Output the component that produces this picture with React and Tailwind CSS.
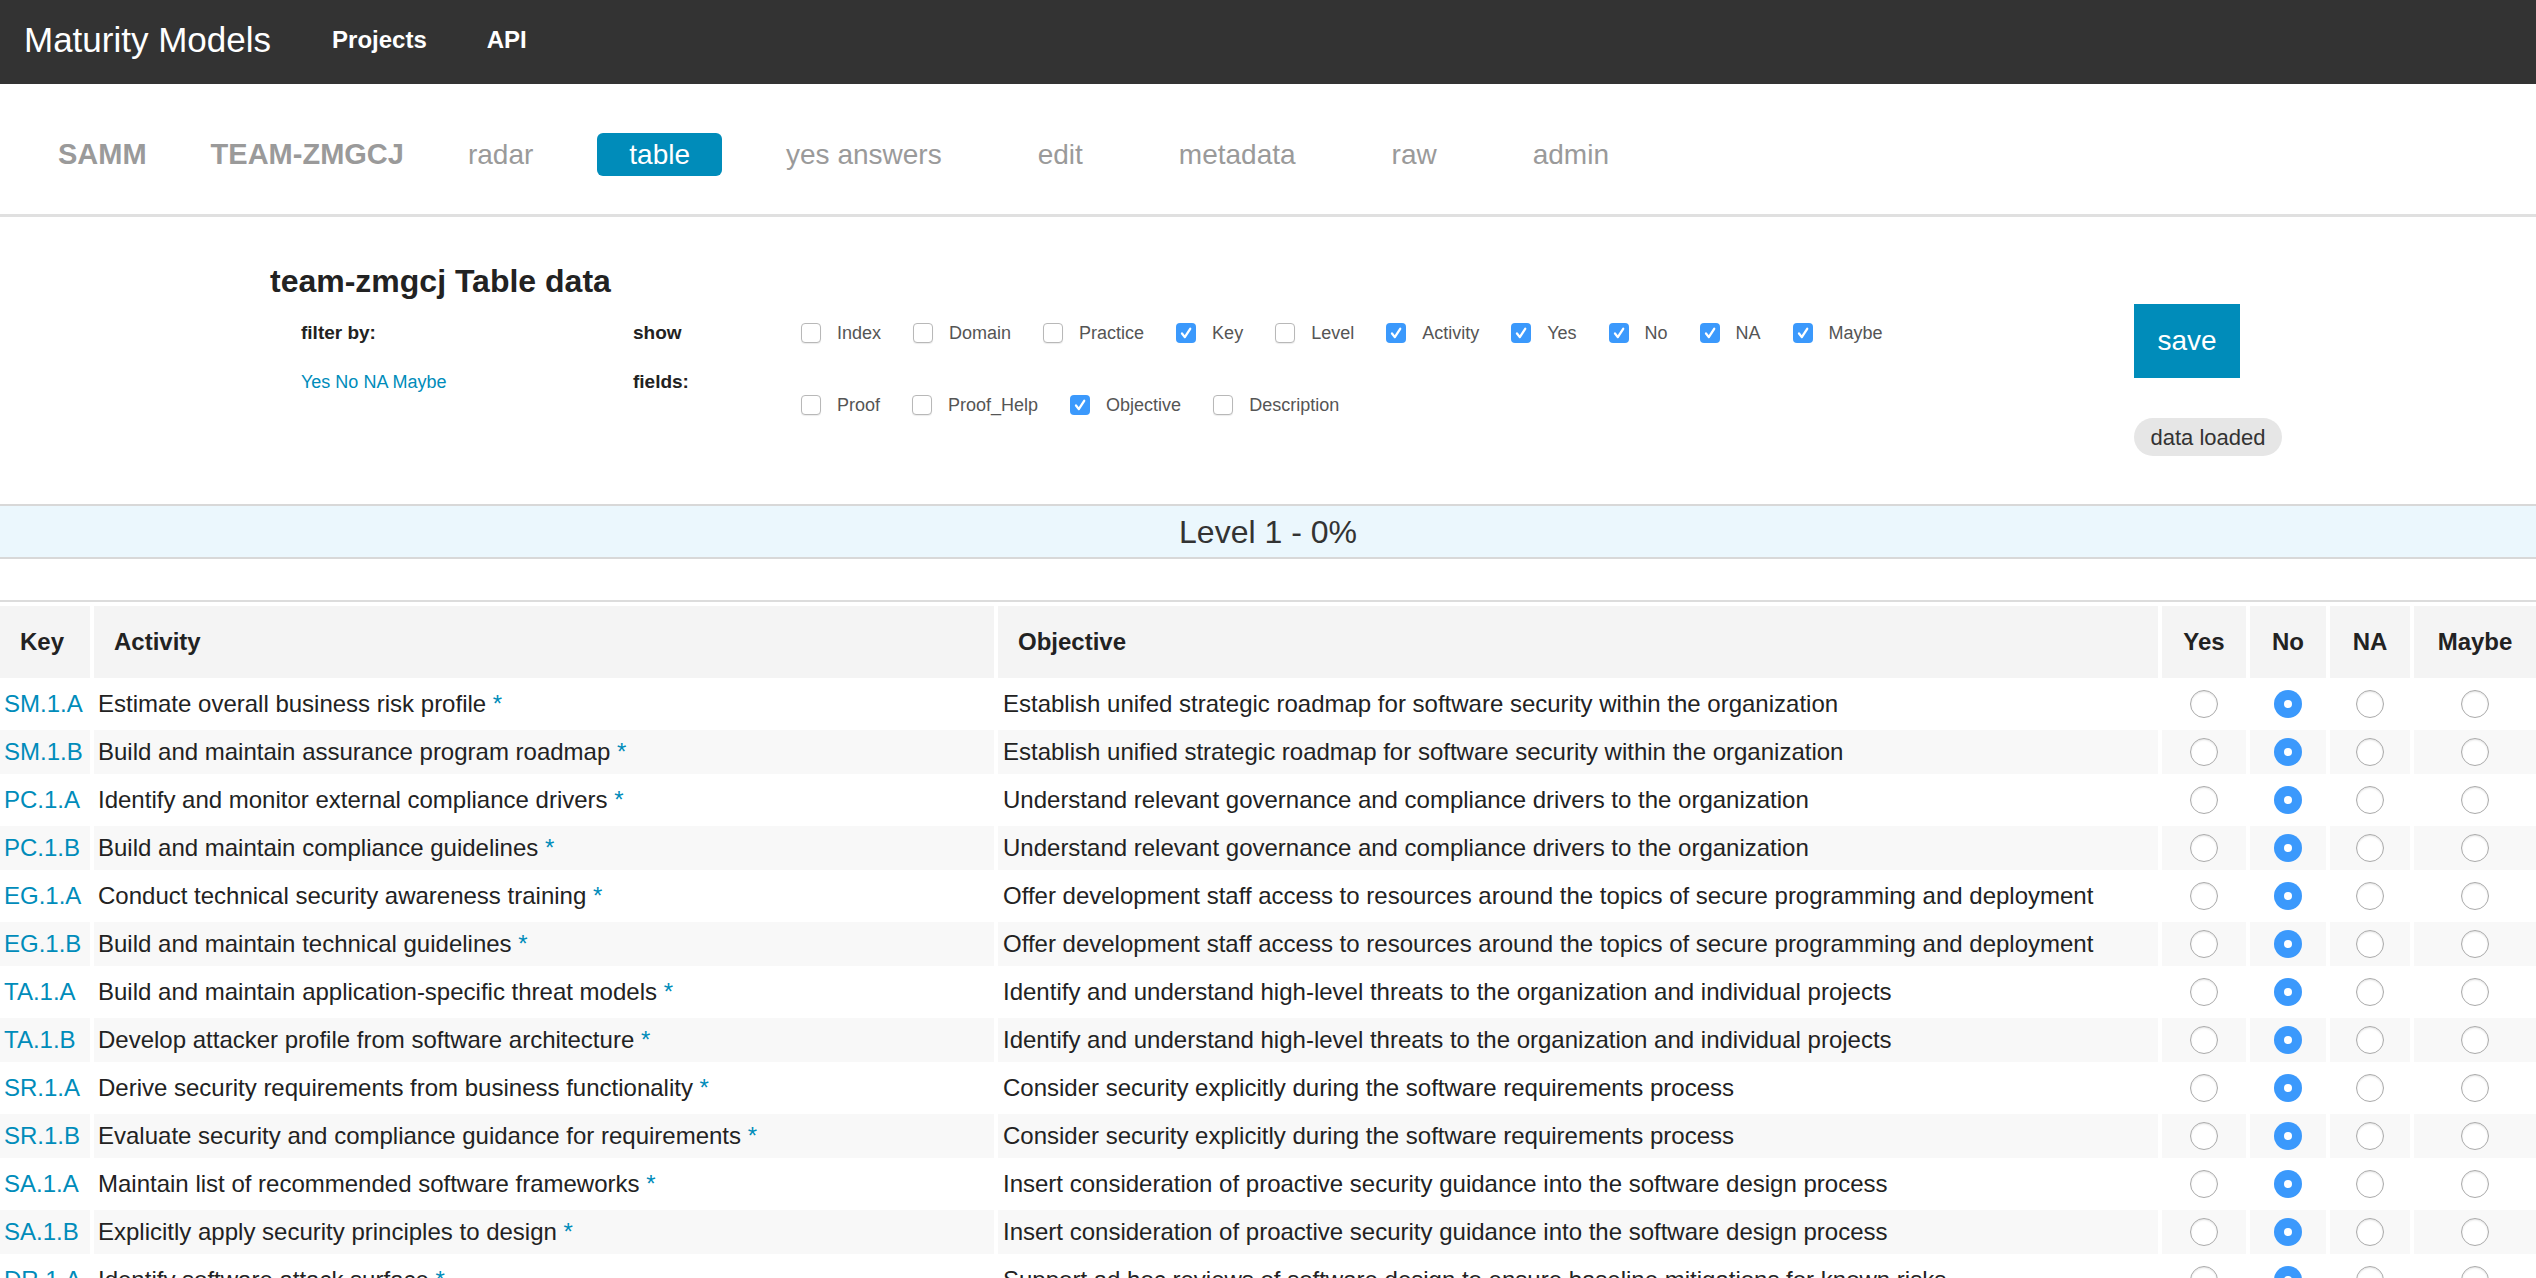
import React from 'react';

const tabs = [
  { label: 'SAMM', className: 'text-[29px] font-bold text-[#9a9a9a]' },
  { label: 'TEAM-ZMGCJ', className: 'text-[29px] font-bold text-[#9a9a9a]' },
  { label: 'radar', className: 'text-[28px] text-[#9a9a9a]' },
  { label: 'table', className: 'ml-[32px] rounded-[6px] bg-[#008cba] text-[28px] text-white' },
  { label: 'yes answers', className: 'ml-[32px] text-[28px] text-[#9a9a9a]' },
  { label: 'edit', className: 'ml-[32px] text-[28px] text-[#9a9a9a]' },
  { label: 'metadata', className: 'ml-[32px] text-[28px] text-[#9a9a9a]' },
  { label: 'raw', className: 'ml-[32px] text-[28px] text-[#9a9a9a]' },
  { label: 'admin', className: 'ml-[32px] text-[28px] text-[#9a9a9a]' },
];

const fields = [
  ['Index', false],
  ['Domain', false],
  ['Practice', false],
  ['Key', true],
  ['Level', false],
  ['Activity', true],
  ['Yes', true],
  ['No', true],
  ['NA', true],
  ['Maybe', true],
  ['Proof', false],
  ['Proof_Help', false],
  ['Objective', true],
  ['Description', false],
];

const gov = 'Establish unified strategic roadmap for software security within the organization';
const comp = 'Understand relevant governance and compliance drivers to the organization';
const edu = 'Offer development staff access to resources around the topics of secure programming and deployment';
const threat = 'Identify and understand high-level threats to the organization and individual projects';
const req = 'Consider security explicitly during the software requirements process';
const arch = 'Insert consideration of proactive security guidance into the software design process';
const design = 'Support ad hoc reviews of software design to ensure baseline mitigations for known risks';

const rows = [
  ['SM.1.A', 'Estimate overall business risk profile', 'Establish unifed strategic roadmap for software security within the organization'],
  ['SM.1.B', 'Build and maintain assurance program roadmap', gov],
  ['PC.1.A', 'Identify and monitor external compliance drivers', comp],
  ['PC.1.B', 'Build and maintain compliance guidelines', comp],
  ['EG.1.A', 'Conduct technical security awareness training', edu],
  ['EG.1.B', 'Build and maintain technical guidelines', edu],
  ['TA.1.A', 'Build and maintain application-specific threat models', threat],
  ['TA.1.B', 'Develop attacker profile from software architecture', threat],
  ['SR.1.A', 'Derive security requirements from business functionality', req],
  ['SR.1.B', 'Evaluate security and compliance guidance for requirements', req],
  ['SA.1.A', 'Maintain list of recommended software frameworks', arch],
  ['SA.1.B', 'Explicitly apply security principles to design', arch],
  ['DR.1.A', 'Identify software attack surface', design],
  ['DR.1.B', 'Analyze design against known security requirements', design],
];

function Checkbox({ checked }) {
  if (checked) {
    return (
      <span className="flex h-[20px] w-[20px] items-center justify-center rounded-[4px] bg-[#3b99fc]">
        <svg viewBox="0 0 20 20" className="h-[20px] w-[20px]">
          <path d="M6 10.5l2.8 3.6L14.2 5.8" fill="none" stroke="white" strokeWidth="2.3" strokeLinecap="round" strokeLinejoin="round" />
        </svg>
      </span>
    );
  }
  return <span className="h-[20px] w-[20px] rounded-[4px] border border-[#b8b8b8] bg-white shadow-[0_1px_1px_rgba(0,0,0,0.08)]" />;
}

function Radio({ checked }) {
  if (checked) {
    return (
      <span className="mx-auto flex h-[28px] w-[28px] items-center justify-center rounded-full bg-[#3b99fc]">
        <span className="h-[8px] w-[8px] rounded-full bg-white" />
      </span>
    );
  }
  return <span className="mx-auto block h-[28px] w-[28px] rounded-full border border-[#ababab] bg-white shadow-[inset_0_1px_2px_rgba(0,0,0,0.12)]" />;
}

function App() {
  return (
    <div className="min-h-screen bg-white font-['Liberation_Sans',Arial,sans-serif] text-[#222]">
      <header className="flex h-[84px] items-center bg-[#333] pb-[4px] pl-[24px] text-white">
        <span className="text-[35px]">Maturity Models</span>
        <a className="ml-[61px] text-[24px] font-bold">Projects</a>
        <a className="ml-[60px] text-[24px] font-bold">API</a>
      </header>

      <nav className="flex h-[133px] border-b-[3px] border-[#e0e0e0] pl-[26px] pt-[49px]">
        {tabs.map((tab) => (
          <a key={tab.label} className={`flex h-[43px] items-center px-[32px] ${tab.className}`}>
            {tab.label}
          </a>
        ))}
      </nav>

      <section className="flex h-[287px] pl-[270px] pt-[44px]">
        <div className="w-[1864px]">
          <h2 className="h-[40px] text-[32px] font-bold leading-[40px] text-[#222]">team-zmgcj Table data</h2>
          <div className="mt-[18px] flex">
            <div className="ml-[31px] w-[332px]">
              <div className="h-[28px] text-[19px] font-bold leading-[28px]">filter by:</div>
              <div className="mt-[21px] h-[28px] text-[18px] leading-[28px] text-[#008cba]">Yes No NA Maybe</div>
            </div>
            <div className="w-[168px]">
              <div className="h-[28px] text-[19px] font-bold leading-[28px]">show</div>
              <div className="mt-[21px] h-[28px] text-[19px] font-bold leading-[28px]">fields:</div>
            </div>
            <div className="flex w-[1140px] flex-wrap gap-y-[44px]">
              {fields.map(([label, checked]) => (
                <label key={label} className="mr-[32px] flex h-[28px] items-center gap-[16px] text-[18px] text-[#555]">
                  <Checkbox checked={checked} />
                  {label}
                </label>
              ))}
            </div>
          </div>
        </div>
        <div className="pt-[43px]">
          <button className="h-[74px] w-[106px] bg-[#008cba] text-[28px] text-white">save</button>
          <div className="mt-[40px] flex h-[38px] w-[148px] items-center justify-center rounded-full bg-[#e6e6e6] text-[22px] text-[#333]">
            data loaded
          </div>
        </div>
      </section>

      <div className="flex h-[55px] items-center justify-center border-y-2 border-[#d8d8d8] bg-[#ebf7fd] text-[32px] text-[#333]">
        Level 1 - 0%
      </div>

      <div className="mt-[41px] overflow-hidden border-t-2 border-[#dcdcdc]">
        <table className="-ml-[4px] w-[2544px] table-fixed border-separate border-spacing-[4px] text-[24px]">
          <colgroup>
            <col className="w-[90px]" />
            <col className="w-[900px]" />
            <col className="w-[1160px]" />
            <col className="w-[84px]" />
            <col className="w-[76px]" />
            <col className="w-[80px]" />
            <col className="w-[122px]" />
          </colgroup>
          <thead>
            <tr className="h-[72px] bg-[#f4f4f4] font-bold">
              <th className="bg-[#f4f4f4] px-[20px] text-left">Key</th>
              <th className="bg-[#f4f4f4] px-[20px] text-left">Activity</th>
              <th className="bg-[#f4f4f4] px-[20px] text-left">Objective</th>
              <th className="bg-[#f4f4f4] text-center">Yes</th>
              <th className="bg-[#f4f4f4] text-center">No</th>
              <th className="bg-[#f4f4f4] text-center">NA</th>
              <th className="bg-[#f4f4f4] text-center">Maybe</th>
            </tr>
          </thead>
          <tbody>
            {rows.map(([key, activity, objective], i) => {
              const cell = i % 2 === 1 ? 'bg-[#f8f8f8]' : 'bg-white';
              return (
                <tr key={key} className="h-[44px]">
                  <td className={`${cell} whitespace-nowrap px-[4px] text-[#008cba]`}>{key}</td>
                  <td className={`${cell} whitespace-nowrap px-[4px]`}>
                    {activity} <span className="text-[#008cba]">*</span>
                  </td>
                  <td className={`${cell} whitespace-nowrap px-[5px]`}>{objective}</td>
                  <td className={cell}><Radio /></td>
                  <td className={cell}><Radio checked /></td>
                  <td className={cell}><Radio /></td>
                  <td className={cell}><Radio /></td>
                </tr>
              );
            })}
          </tbody>
        </table>
      </div>
    </div>
  );
}

export default App;
